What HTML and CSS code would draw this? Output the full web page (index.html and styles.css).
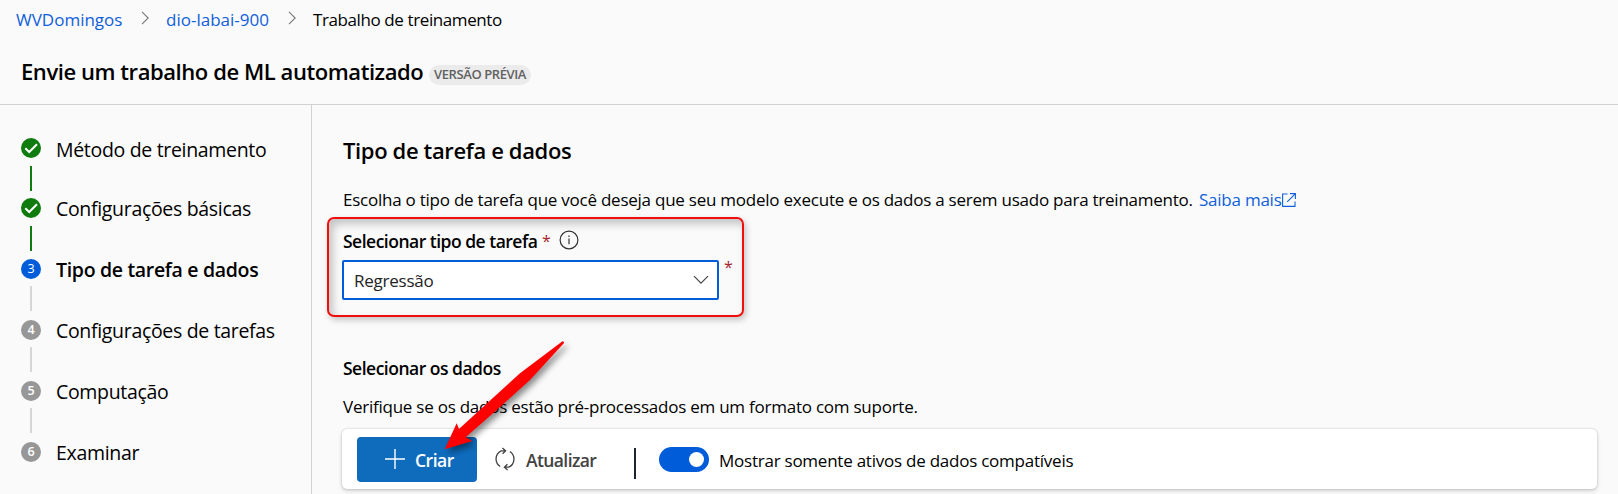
FILE: index.html
```html
<!DOCTYPE html>
<html lang="pt-BR">
<head>
<meta charset="utf-8">
<title>Trabalho de treinamento</title>
<link rel="stylesheet" href="styles.css">
</head>
<body>
<nav class="crumbs">
  <a class="crumb crumb-a">WVDomingos</a>
  <svg class="sep" width="9" height="14" viewBox="0 0 9 14"><path d="M1 .8 7.2 7 1 13.2"/></svg>
  <a class="crumb crumb-b">dio-labai-900</a>
  <svg class="sep" width="9" height="14" viewBox="0 0 9 14"><path d="M1 .8 7.2 7 1 13.2"/></svg>
  <span class="crumb-c">Trabalho de treinamento</span>
</nav>
<header class="title-bar">
  <h1 class="title">Envie um trabalho de ML automatizado</h1>
  <span class="badge">VERSÃO PRÉVIA</span>
</header>
<div class="body">
  <aside class="steps">
    <div class="step done first"><div class="rail"><span class="dot"><svg width="20" height="20" viewBox="0 0 20 20"><path d="M4.3 10.3 8.2 14 16 6.3"/></svg></span><i class="line"></i></div><span class="name">Método de treinamento</span></div>
    <div class="step done"><div class="rail"><span class="dot"><svg width="20" height="20" viewBox="0 0 20 20"><path d="M4.3 10.3 8.2 14 16 6.3"/></svg></span><i class="line"></i></div><span class="name">Configurações básicas</span></div>
    <div class="step current"><div class="rail"><span class="dot">3</span><i class="line"></i></div><span class="name">Tipo de tarefa e dados</span></div>
    <div class="step"><div class="rail"><span class="dot">4</span><i class="line"></i></div><span class="name">Configurações de tarefas</span></div>
    <div class="step"><div class="rail"><span class="dot">5</span><i class="line"></i></div><span class="name">Computação</span></div>
    <div class="step"><div class="rail"><span class="dot">6</span></div><span class="name">Examinar</span></div>
  </aside>
  <main class="main">
    <h2 class="heading">Tipo de tarefa e dados</h2>
    <p class="desc"><span class="desc-text">Escolha o tipo de tarefa que você deseja que seu modelo execute e os dados a serem usado para treinamento.</span><a class="more">Saiba mais</a><svg class="ext" width="14" height="14" viewBox="0 0 14 14"><path d="M5.5 1H.6v12.4H13V8.5M8 .6h5.4V6M13.2.8 5.2 8.8"/></svg></p>
    <section class="highlight">
      <div class="label-row">
        <span class="label">Selecionar tipo de tarefa</span><span class="req">*</span>
        <svg class="info" width="20" height="20" viewBox="0 0 20 20"><circle cx="10" cy="10" r="8.9"/><path d="M10 8.4v5.8M10 5.4v1.5"/></svg>
      </div>
      <div class="select-row">
        <div class="select"><span class="value">Regressão</span><svg class="chev" width="16" height="10" viewBox="0 0 16 10"><path d="M1 1.2 8 8.2 15 1.2"/></svg></div>
        <span class="req req-side">*</span>
      </div>
    </section>
    <h3 class="sub">Selecionar os dados</h3>
    <p class="hint">Verifique se os dados estão pré-processados em um formato com suporte.</p>
    <div class="toolbar">
      <button class="create"><svg width="20" height="20" viewBox="0 0 20 20"><path d="M10 0v20M0 10h20"/></svg><span>Criar</span></button>
      <div class="refresh"><svg width="20" height="24" viewBox="0 0 20 24"><path d="M6.2 3.8A9 9 0 0 0 5.2 19.5M13.8 20.2A9 9 0 0 0 14.8 4.5M7.4 1 10.6 3.8 7.6 6.8M5.8 3.9h4.8M12.6 23 9.4 20.2 12.4 17.2M14.2 20.1H9.4"/></svg><span>Atualizar</span></div>
      <i class="bar"></i>
      <span class="toggle"><i class="knob"></i></span>
      <span class="toggle-label">Mostrar somente ativos de dados compatíveis</span>
    </div>
  </main>
</div>
<svg class="arrow" width="140" height="130" viewBox="435 330 140 130"><path d="M444.7 449.3 456.7 423.3 459 429 476.7 412.7 520 373.3 562.5 341.2Q564.4 341.3 563.8 343.2L530 380 496.7 410 465.7 437.3 472.3 441Z"/></svg>
</body>
</html>
```

FILE: styles.css
```css
* { box-sizing: border-box; }
body { margin: 0; width: 1618px; height: 494px; overflow: hidden; position: relative; background: #fafafa; color: #000; font-family: "Open Sans", "Noto Sans", sans-serif; font-size: 17px; letter-spacing: -.24px; white-space: nowrap; }
h1, h2, h3, p { margin: 0; font-weight: 600; }
p { font-weight: 400; }
svg { display: block; fill: none; flex: none; }

.crumbs { display: flex; align-items: center; height: 38px; padding-left: 16px; }
.crumb { color: #0f5fdc; letter-spacing: 0; }
.sep { stroke: #777; stroke-width: 1.1; margin: 0 16px 2px 18px; }
.crumb-a { width: 107px; }
.crumb-b { width: 104px; }
.crumb-c { letter-spacing: -.4px; }

.title-bar { display: flex; align-items: center; height: 67px; padding: 0 0 1px 21px; border-bottom: 1px solid #d1d1d1; }
.title { font-size: 22px; width: 408px; letter-spacing: -.43px; }
.badge { width: 102px; height: 20px; margin-top: 8px; border-radius: 10px; background: #ebebeb; color: #616161; font-size: 13px; font-weight: 600; line-height: 19px; text-align: center; letter-spacing: -.4px; }

.body { display: flex; height: 389px; }
.steps { flex: none; width: 312px; border-right: 1px solid #d1d1d1; padding: 33px 0 0 21px; }
.step { display: flex; height: 61px; gap: 15px; }
.step.first { height: 60px; }
.rail { width: 20px; display: flex; flex-direction: column; align-items: center; }
.dot { width: 20px; height: 20px; flex: none; border-radius: 50%; background: #979797; color: #fff; font-size: 12.5px; font-weight: 600; line-height: 20px; text-align: center; letter-spacing: 0; }
.line { width: 2px; height: 25px; margin-top: 7px; background: #d6d6d6; }
.done .dot, .done .line { background: #107c10; }
.dot path { stroke: #fff; stroke-width: 2; }
.done .line { margin-top: 8px; }
.current .dot { background: #015cda; font-weight: 400; }
.name { font-size: 19.5px; line-height: 22px; height: 22px; letter-spacing: -.32px; }
.first .name { padding-top: 1px; }
.current .name { font-weight: 600; }

.main { flex: 1; padding: 30px 21px 0 31px; }
.heading { font-size: 22px; line-height: 30px; letter-spacing: -.36px; }
.desc { display: flex; align-items: center; height: 24px; margin-top: 22px; }
.desc-text { width: 856px; }
.more { width: 82px; color: #0f5fdc; }
.ext { stroke: #0f5fdc; stroke-width: 1.1; margin: 1px 0 0 1px; }

.highlight { width: 417px; height: 100px; margin: 6px 0 0 -16px; padding: 10px 0 0 13px; border: 2px solid #f20d0d; border-radius: 7px; box-shadow: 2px 3px 6px rgba(0,0,0,.22), inset 4px 5px 8px rgba(0,0,0,.22); }
.label-row { display: flex; align-items: center; height: 24px; padding-left: 1px; }
.label { width: 199px; font-weight: 600; font-size: 17.5px; letter-spacing: -.5px; }
.req { color: #a4262c; font-size: 16px; }
.info { margin: 0 0 3px 8px; stroke: #333; stroke-width: 1.2; }
.select-row { display: flex; margin-top: 7px; }
.select { display: flex; justify-content: space-between; align-items: center; width: 377px; height: 40px; padding: 0 8px 0 10px; border: 2px solid #015cda; border-radius: 2px; background: #fff; }
.value { color: #242424; }
.chev { stroke: #444; stroke-width: 1.2; }
.req-side { margin: -5px 0 0 5px; line-height: 24px; }

.sub { font-size: 17.5px; line-height: 24px; margin-top: 39px; letter-spacing: -.5px; }
.hint { line-height: 24px; margin-top: 15px; }
.toolbar { display: flex; align-items: center; width: 1255px; height: 60px; margin: 10px 0 0 -1px; padding-left: 15px; border-radius: 5px; background: #fff; box-shadow: 0 0 2px rgba(0,0,0,.22), 0 2px 4px rgba(0,0,0,.16); }
.create { display: flex; align-items: center; gap: 10px; width: 120px; height: 45px; padding: 0 0 0 28px; border: 0; border-radius: 4px; background: #0f6cbd; color: #fff; font: 600 17.5px "Open Sans", sans-serif; letter-spacing: -.5px; }
.create svg { stroke: #fff; stroke-width: 1.4; }
.create span { padding-top: 2px; }
.refresh { display: flex; align-items: center; gap: 11px; width: 139px; margin-left: 18px; color: #424242; font-size: 17.5px; font-weight: 600; letter-spacing: -.6px; }
.refresh svg { stroke: #424242; stroke-width: 1.3; }
.refresh span, .toggle-label { padding-top: 2px; }
.bar { width: 2px; height: 31px; margin-top: 8px; background: #1c2430; }
.toggle { width: 50px; height: 25px; margin-left: 23px; padding: 5px; border-radius: 13px; background: #015cda; }
.knob { display: block; width: 15px; height: 15px; margin-left: 25px; border-radius: 50%; background: #fff; }
.toggle-label { margin-left: 10px; }

/* annotation arrow drawn over the page */
.arrow { position: absolute; left: 435px; top: 330px; filter: drop-shadow(3px 4px 3px rgba(0,0,0,.45)); }
.arrow path { fill: #f00; }
```
